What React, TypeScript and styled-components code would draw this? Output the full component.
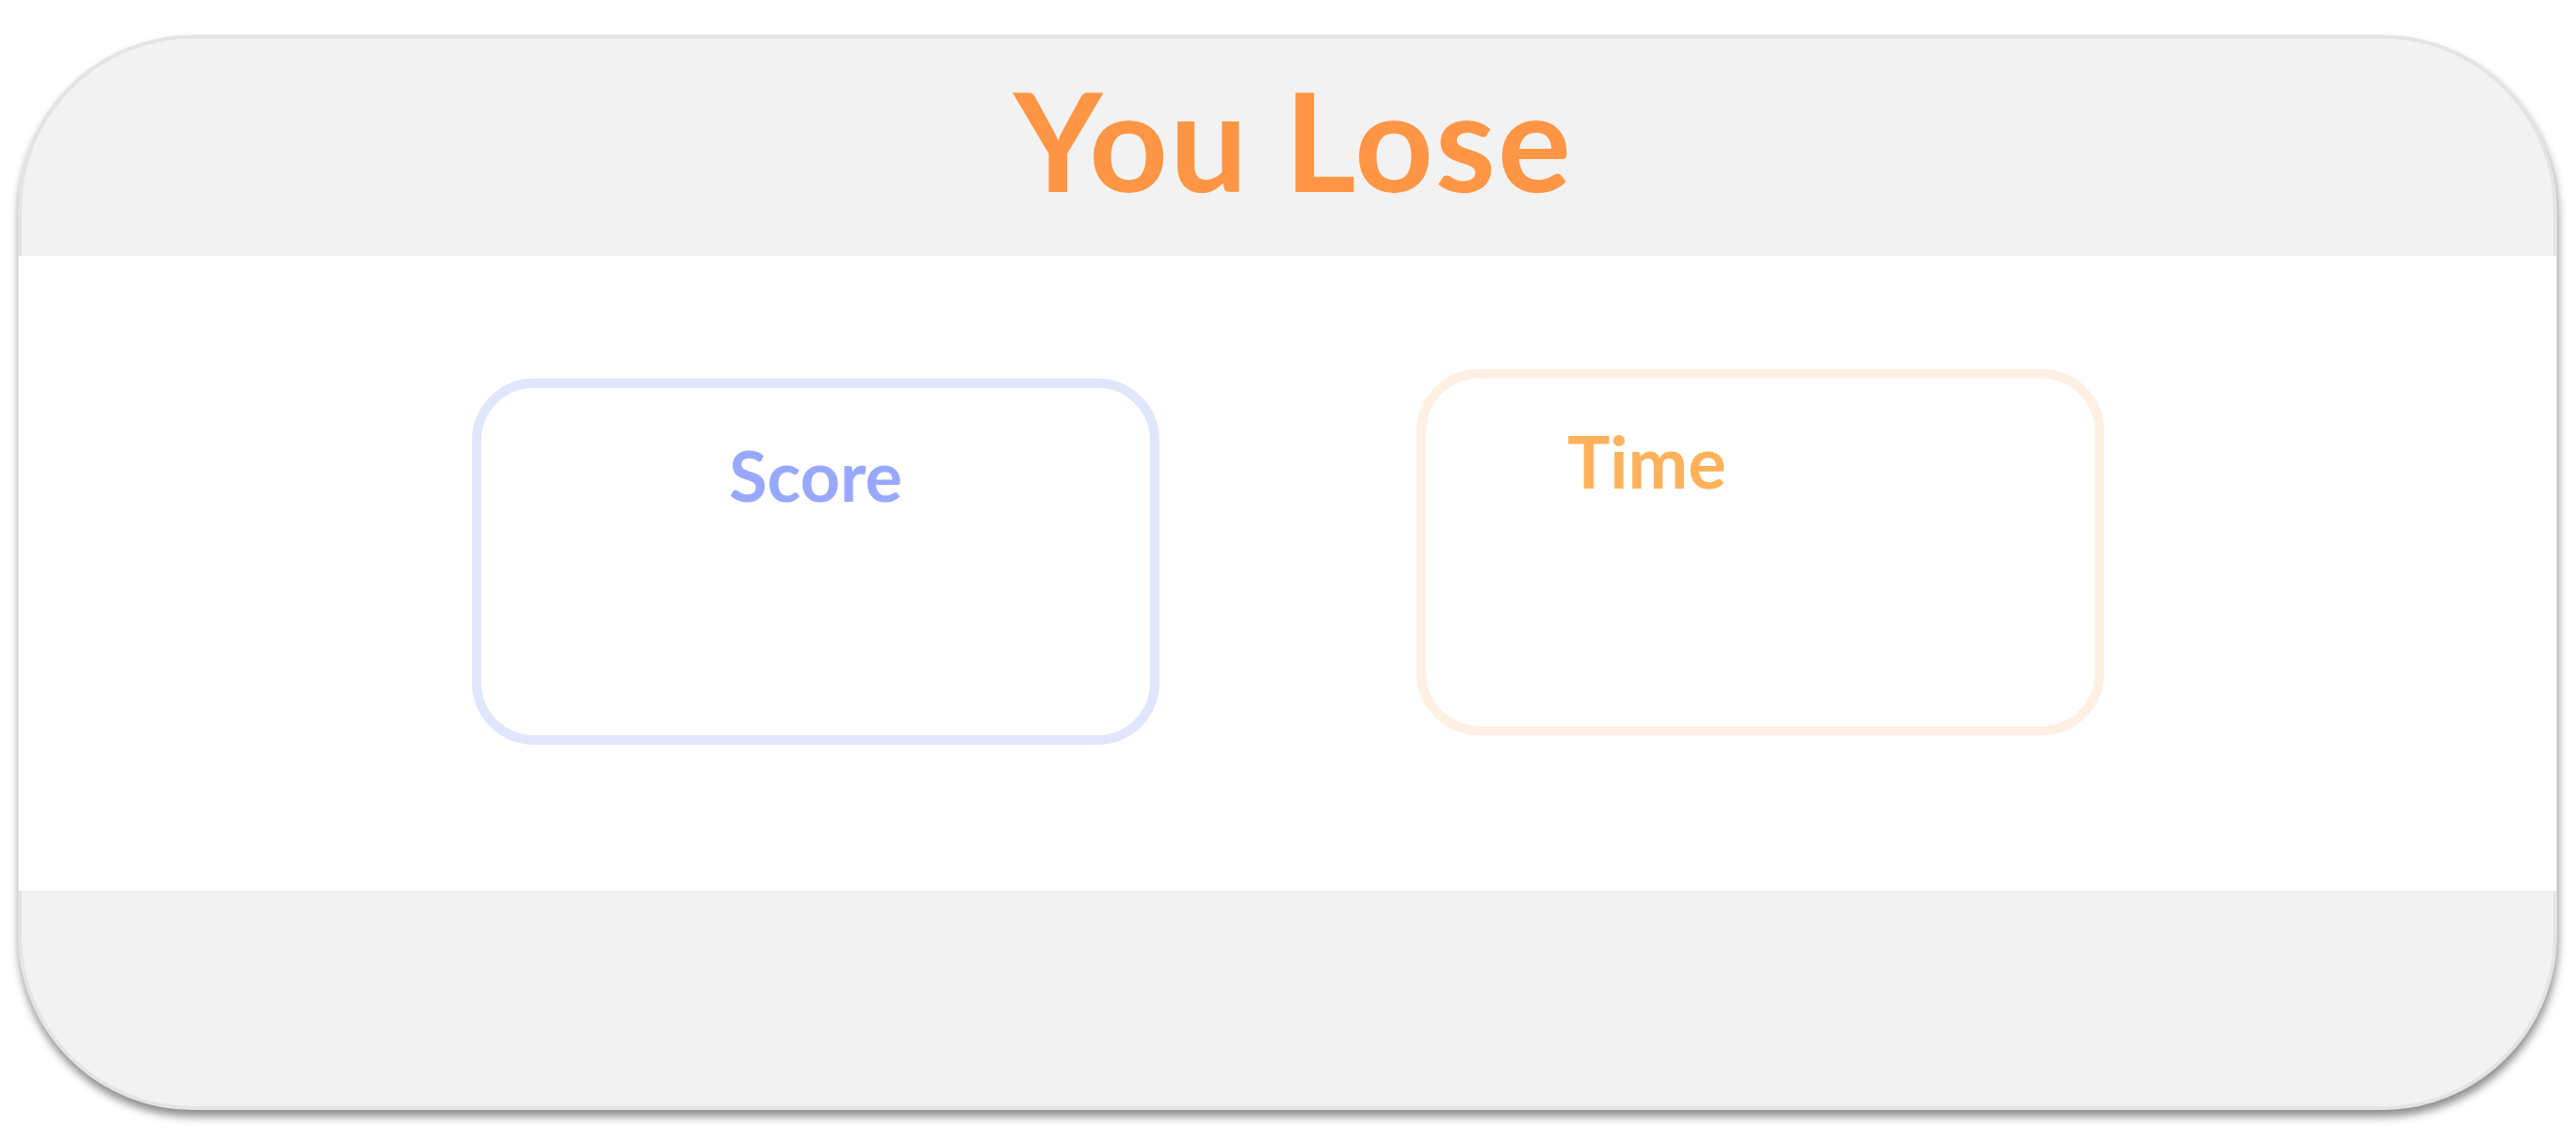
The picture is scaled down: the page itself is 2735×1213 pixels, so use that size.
import React from 'react'
import styled, {createGlobalStyle} from 'styled-components'

const GlobalStyle = createGlobalStyle`
  html, body {
    margin: 0;
    padding: 0;
    background: #ffffff;
    font-family: Lato, "Open Sans", sans-serif;
  }
`

export default function App() {
  return (
    <>
      <GlobalStyle />
      <Page>
        <Card>
          <Header>
            <Title>You Lose</Title>
          </Header>
          <Band>
            <StatBox color="#e1e6fd" top={130} left={481}>
              <Label color="#99a8ff" align="center" size={74} pad={56}>
                Score
              </Label>
            </StatBox>
            <StatBox color="#fef0e2" top={120} left={273}>
              <Label color="#ffb25b" align="left" size={76} pad={50}>
                Time
              </Label>
            </StatBox>
          </Band>
        </Card>
      </Page>
    </>
  )
}

const Page = styled.div`
  padding: 37px 20px 40px 19px;
`

const Card = styled.div`
  box-sizing: border-box;
  width: 2696px;
  height: 1142px;
  border: 4px solid #e4e4e4;
  border-radius: 186px;
  background: #f2f2f2;
  display: flex;
  flex-direction: column;
  box-shadow: 1px 7px 10px rgba(0, 0, 0, 0.45);
`

const Header = styled.div`
  height: 231px;
  box-sizing: border-box;
  padding: 34px 0 0 12px;
  text-align: center;
`

const Title = styled.h1`
  margin: 0;
  font-size: 146px;
  line-height: 1;
  font-weight: 700;
  letter-spacing: 2px;
  color: #ff9646;
  white-space: nowrap;
`

const Band = styled.div`
  height: 674px;
  margin: 0 -3px;
  background: #ffffff;
  display: flex;
  align-items: flex-start;
`

const StatBox = styled.div<{color: string; top: number; left: number}>`
  box-sizing: border-box;
  width: 730px;
  height: 389px;
  margin-top: ${(p) => p.top}px;
  margin-left: ${(p) => p.left}px;
  border: 10px solid ${(p) => p.color};
  border-radius: 66px;
  background: #ffffff;
`

const Label = styled.div<{
  color: string
  align: 'left' | 'center'
  size: number
  pad: number
}>`
  padding-top: ${(p) => p.pad}px;
  padding-left: ${(p) => (p.align === 'left' ? '150px' : '0')};
  text-align: ${(p) => p.align};
  font-size: ${(p) => p.size}px;
  line-height: 1;
  font-weight: 700;
  color: ${(p) => p.color};
`
